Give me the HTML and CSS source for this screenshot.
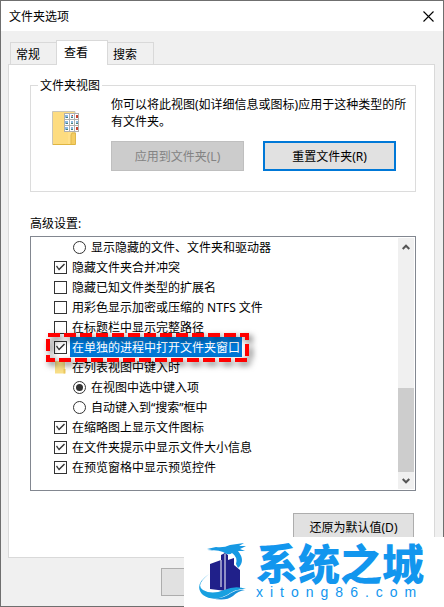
FILE: index.html
```html
<!DOCTYPE html>
<html lang="zh-CN">
<head>
<meta charset="utf-8">
<title>文件夹选项</title>
<link rel="stylesheet" href="styles.css">
</head>
<body>
<main class="dialog">
  <header class="titlebar">
    <h1 class="title">文件夹选项</h1>
    <button class="close" type="button" aria-label="关闭">
      <svg width="11" height="11" viewBox="0 0 11 11"><path d="M.5 .5L10.500 10.500M10.500 .5L.5 10.500" fill="none" stroke="#000" stroke-width="1.100"/></svg>
    </button>
  </header>
  <div class="content">
    <div class="tabs" role="tablist">
      <button class="tab" type="button" role="tab">常规</button>
      <button class="tab tab-active" type="button" role="tab" aria-selected="true">查看</button>
      <button class="tab" type="button" role="tab">搜索</button>
    </div>
    <section class="panel">
      <fieldset class="group">
        <legend class="legend">文件夹视图</legend>
        <svg class="folder" width="28" height="36" viewBox="0 0 28 36">
          <path d="M.5 1.500H23V34.500H.5Z" fill="#ffe08a" stroke="#c9c5b8"/>
          <path d="M1 2H16V34H1Z" fill="#fddc80"/>
          <path d="M20 23H23.500V34.500H19V25Z" fill="#f5cd62" stroke="#dfb84e"/>
          <path d="M1 34.500H23" stroke="#dfb540"/>
          <path d="M12 3H27V22H12Z" fill="#b0b0b0"/>
          <path d="M13 4h4v5h-4zM18 4h4v5h-4zM23 4h3v5h-3zM13 10h4v5h-4zM18 10h4v5h-4zM23 10h3v5h-3zM13 16h4v5h-4zM18 16h4v5h-4zM23 16h3v5h-3z" fill="#fff"/>
          <path d="M13 5h3v3h-3zM19 5h2v3h-2zM13 11h3v3h-3zM19 11h2v3h-2zM24 11h2v3h-2zM13 17h3v3h-3zM19 17h2v3h-2z" fill="#8ab8e0"/>
          <path d="M14 7h2v1h-2zM19 7h2v1h-2zM14 13h2v1h-2zM19 13h2v1h-2zM24 13h2v1h-2zM14 19h2v1h-2zM19 19h2v1h-2z" fill="#4b7f78"/>
          <path d="M24 5h2v3h-2zM24 17h2v3h-2zM20 5h1v1h-1z" fill="#c9432f"/>
        </svg>
        <div class="group-body">
          <p class="note">你可以将此视图(如详细信息或图标)应用于这种类型的所有文件夹。</p>
          <div class="group-actions">
            <button class="button" type="button" disabled>应用到文件夹(L)</button>
            <button class="button button-default" type="button">重置文件夹(R)</button>
          </div>
        </div>
      </fieldset>
      <h2 class="list-title">高级设置:</h2>
      <div class="list">
        <div class="rows">
          <label class="row row-nested"><input class="mark radio" type="radio" name="hidden"><span class="text">显示隐藏的文件、文件夹和驱动器</span></label>
          <label class="row"><input class="mark check" type="checkbox" checked><span class="text">隐藏文件夹合并冲突</span></label>
          <label class="row"><input class="mark check" type="checkbox"><span class="text">隐藏已知文件类型的扩展名</span></label>
          <label class="row"><input class="mark check" type="checkbox"><span class="text">用彩色显示加密或压缩的 NTFS 文件</span></label>
          <label class="row"><input class="mark check" type="checkbox"><span class="text">在标题栏中显示完整路径</span></label>
          <label class="row row-marked"><input class="mark check" type="checkbox" checked><span class="text text-selected">在单独的进程中打开文件夹窗口</span>
            <svg class="frame" width="203" height="29" viewBox="0 0 203 29"><rect x="2" y="2" width="199" height="25" fill="none" stroke="#f00" stroke-width="4" stroke-dasharray="12 4"/></svg>
          </label>
          <div class="row"><svg class="mark" width="13" height="13" viewBox="0 0 13 13"><path d="M1 0H11V12.500H1Z" fill="#f9df87"/><path d="M9.500 8V12.500H11.500V8Z" fill="#ecc85f"/></svg><span class="text">在列表视图中键入时</span></div>
          <label class="row row-nested"><input class="mark radio" type="radio" name="typing" checked><span class="text">在视图中选中键入项</span></label>
          <label class="row row-nested"><input class="mark radio" type="radio" name="typing"><span class="text">自动键入到“搜索”框中</span></label>
          <label class="row"><input class="mark check" type="checkbox" checked><span class="text">在缩略图上显示文件图标</span></label>
          <label class="row"><input class="mark check" type="checkbox" checked><span class="text">在文件夹提示中显示文件大小信息</span></label>
          <label class="row"><input class="mark check" type="checkbox" checked><span class="text">在预览窗格中显示预览控件</span></label>
        </div>
        <div class="scrollbar">
          <button class="arrow" type="button" aria-label="向上滚动"><svg width="8" height="6" viewBox="0 0 8 6"><path d="M.7 5L4 1.700L7.300 5" fill="none" stroke="#555" stroke-width="2"/></svg></button>
          <div class="thumb"></div>
          <button class="arrow" type="button" aria-label="向下滚动"><svg width="8" height="6" viewBox="0 0 8 6"><path d="M.7 1L4 4.300L7.300 1" fill="none" stroke="#555" stroke-width="2"/></svg></button>
        </div>
      </div>
      <div class="restore"><button class="button button-restore" type="button">还原为默认值(D)</button></div>
    </section>
    <footer class="footer"><button class="button button-ok" type="button" aria-label="确定"></button></footer>
  </div>
</main>
<aside class="brand">
  <svg class="brand-logo" width="50" height="58" viewBox="0 0 50 58">
    <path d="M12 21L23 17V12L27 10L30 12V17L36 15V22L42 27V46L28 48L12 46Z" fill="#20208a"/>
    <path d="M23 17V44M27 11V48" stroke="#fff" stroke-width="1"/>
    <path d="M9 6L18 4Q26 5 32 2L46 0L41 3L48 3L42 6L47 8L40 8Q48 18 40 25L38 21Q40 14 34 10Q31 13 25 9Q18 6 9 8L14 7Z" fill="#1799e3"/>
    <path d="M11 31Q-3 42 5 47Q14 52 26 47Q38 42 48 46Q38 45 29 52Q15 59 5 52Q-5 42 11 31Z" fill="#18a0e0"/>
    <path d="M13 55Q24 57 33 50Q40 46 47 47Q40 48 35 53Q27 59 13 55Z" fill="#168fd8"/>
  </svg>
  <div class="brand-words">
    <strong class="brand-name">系统之城</strong>
    <span class="brand-site">xitong86.com</span>
  </div>
</aside>
</body>
</html>
```
FILE: styles.css
```css
* {
  box-sizing: border-box;
}

body {
  margin: 0;
  font: 12px/17px "Noto Sans", "Noto Sans CJK SC", sans-serif;
  color: #000;
  background: #f0f0f0;
}

button {
  font: inherit;
  color: inherit;
}

.dialog {
  display: flex;
  flex-direction: column;
  min-height: 100vh;
  border: 1px solid #6f6f6f;
  background: #f0f0f0;
}

.titlebar {
  display: flex;
  align-items: center;
  justify-content: space-between;
  height: 30px;
  padding: 0 8px;
  background: #fff;
}

.title,
.list-title {
  margin: 0;
  font-size: 12px;
  font-weight: 400;
}

.close {
  display: flex;
  padding: 1px;
  border: 0;
  background: none;
}

.content {
  display: flex;
  flex: 1;
  flex-direction: column;
  padding: 9px 8px 10px 7px;
}

.tabs {
  display: flex;
  align-items: flex-end;
  padding-left: 2px;
}

.tab {
  width: 47px;
  height: 22px;
  padding: 2px 5px 0;
  border: 1px solid #d9d9d9;
  border-bottom: 0;
  background: #f0f0f0;
  text-align: left;
}

.tab-active {
  z-index: 1;
  width: 52px;
  height: 25px;
  margin: 0 -1px -1px;
  padding: 0 7px 2px;
  background: #fff;
}

.panel {
  flex: 1;
  padding: 12px 18px 15px 21px;
  border: 1px solid #d9d9d9;
  background: #fff;
}

.group {
  display: flex;
  gap: 31px;
  min-width: 0;
  margin: 0;
  padding: 2px 8px 20px 21px;
  border: 1px solid #dcdcdc;
}

.legend {
  margin-left: -14px;
  padding: 0 2px;
}

.folder {
  flex: none;
  margin-top: 14px;
}

.group-body {
  flex: 1;
}

.note {
  margin: 0 0 11px;
}

.group-actions {
  display: flex;
  gap: 19px;
}

.button {
  height: 30px;
  padding: 0;
  border: 1px solid #adadad;
  background: #e1e1e1;
}

.group-actions .button {
  width: 133px;
}

.button:disabled {
  border-color: #bfbfbf;
  background: #ccc;
  color: #838383;
}

.button-default {
  border: 2px solid #0078d7;
}

.list-title {
  margin: 23px 0 4px;
}

.list {
  display: flex;
  justify-content: space-between;
  height: 255px;
  border: 1px solid #828790;
}

.row {
  position: relative;
  display: flex;
  align-items: center;
  gap: 3px;
  height: 20px;
  padding-left: 23px;
}

.row-nested {
  padding-left: 42px;
}

.row-marked {
  z-index: 1;
}

.text {
  padding: 2px 2px 1px;
}

.text-selected {
  background: #0078d7;
  color: #fff;
}

.mark {
  flex: none;
  display: grid;
  place-items: center;
  width: 13px;
  height: 13px;
  margin: 0;
}

.check,
.radio {
  appearance: none;
  border: 1px solid #333;
  background: #fff;
}

.radio {
  border-radius: 50%;
}

.check:checked::before {
  content: "";
  width: 11px;
  height: 11px;
  background: #333;
  clip-path: polygon(1px 5px, 2px 4px, 4px 7px, 9px 2px, 10px 3px, 4px 9px);
}

.radio:checked::before {
  content: "";
  width: 7px;
  height: 7px;
  border-radius: 50%;
  background: #333;
}

.frame {
  position: absolute;
  top: -4px;
  left: 15px;
  overflow: visible;
  filter: drop-shadow(3px 3px 3px rgba(0, 0, 0, 0.6));
}

.scrollbar {
  display: flex;
  flex-direction: column;
  width: 16px;
  margin: 1px;
  background: #f0f0f0;
}

.arrow {
  display: grid;
  place-items: center;
  height: 17px;
  padding: 0;
  border: 0;
  background: none;
}

.thumb {
  height: 84px;
  margin-top: auto;
  background: #cdcdcd;
}

.restore {
  display: flex;
  justify-content: flex-end;
  margin-top: 22px;
  padding-right: 2px;
}

.button-restore {
  width: 121px;
  height: 28px;
}

.footer {
  display: flex;
  padding: 10px 0 0 153px;
}

.button-ok {
  width: 88px;
  height: 28px;
}

.brand {
  position: absolute;
  right: 0;
  bottom: 0;
  z-index: 2;
  display: flex;
  gap: 8px;
  width: 260px;
  height: 70px;
  padding: 6px 14px 0;
  background: #fff;
}

.brand-logo {
  flex: none;
}

.brand-words {
  display: flex;
  flex-direction: column;
  gap: 3px;
  color: #1296ee;
  white-space: nowrap;
}

.brand-name {
  font: 900 42px/38px "Noto Sans CJK SC", sans-serif;
}

.brand-site {
  font: 14px/16px "Liberation Sans", sans-serif;
  letter-spacing: 7px;
}
```
